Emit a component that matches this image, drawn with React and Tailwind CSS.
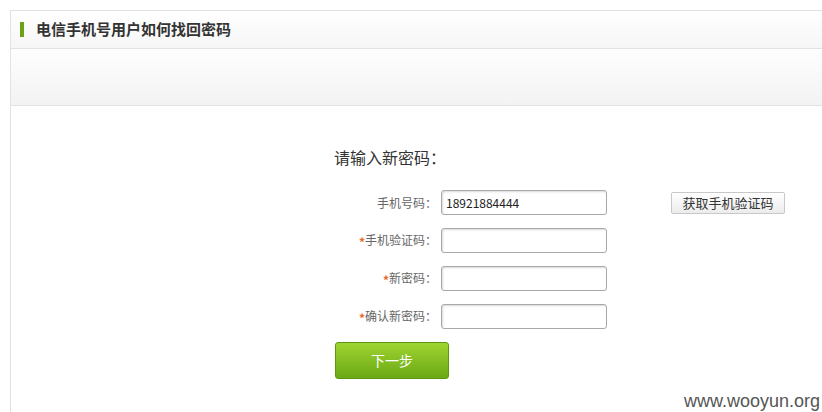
import React from 'react';

const font = { fontFamily: '"Noto Sans CJK SC", "Liberation Sans", sans-serif' };

const Row = ({ label, required, value, children }) => (
  <div className="flex items-center h-[25px]">
    <label className="w-[103px] text-right text-[12px] text-[#666] leading-none">
      {required && <span className="text-[#e5662a] text-[12px] font-bold align-middle">*</span>}
      {label}：
    </label>
    <input
      type="text"
      defaultValue={value}
      className="ml-[4px] w-[166px] h-[25px] px-[4px] text-[12px] text-[#222] border border-[#a9a9a9] rounded-[3px] bg-white shadow-[inset_1px_1px_2px_rgba(0,0,0,0.15)] focus:outline-none"
    />
    {children}
  </div>
);

export default function App() {
  return (
    <div className="relative w-[822px] h-[412px] overflow-hidden bg-white pl-[10px] pt-[10px]" style={font}>
      <div className="h-full border-t border-l border-[#e2e2e2] flex flex-col">
        {/* title bar */}
        <div className="h-[38px] flex items-center pl-[9px] bg-gradient-to-b from-white to-[#f6f6f6] border-b border-[#e2e2e2]">
          <span className="w-[4px] h-[15px] bg-[#6ea11b]"></span>
          <h2 className="ml-[12px] text-[15px] font-bold text-[#333]">电信手机号用户如何找回密码</h2>
        </div>
        {/* empty band */}
        <div className="h-[57px] bg-gradient-to-b from-[#fefefe] to-[#f3f3f3] border-b border-[#e2e2e2]"></div>

        {/* form */}
        <div className="flex-1 pl-[323px] pt-[41px]">
          <p className="text-[16px] leading-[20px] text-[#333]">请输入新密码：</p>
          <div className="mt-[23px] flex flex-col gap-[13px]">
            <Row label="手机号码" value="18921884444">
              <button className="ml-[64px] w-[114px] h-[22px] text-[13px] text-[#333] border border-[#c8c8c8] rounded-[2px] bg-gradient-to-b from-white to-[#ececec]">
                获取手机验证码
              </button>
            </Row>
            <Row label="手机验证码" required />
            <Row label="新密码" required />
            <Row label="确认新密码" required />
          </div>
          <button className="mt-[13px] ml-px w-[114px] h-[37px] text-[14px] text-white rounded-[3px] border border-[#5e9612] bg-gradient-to-b from-[#a0d530] to-[#6aa815]">
            下一步
          </button>
        </div>
      </div>

      {/* watermark */}
      <span
        className="absolute right-[1px] bottom-[1px] text-[18px] text-[#555] leading-[19px] bg-white/80 px-[1px]"
        style={{ fontFamily: '"Liberation Sans", Arial, sans-serif' }}
      >
        www.wooyun.org
      </span>
    </div>
  );
}
